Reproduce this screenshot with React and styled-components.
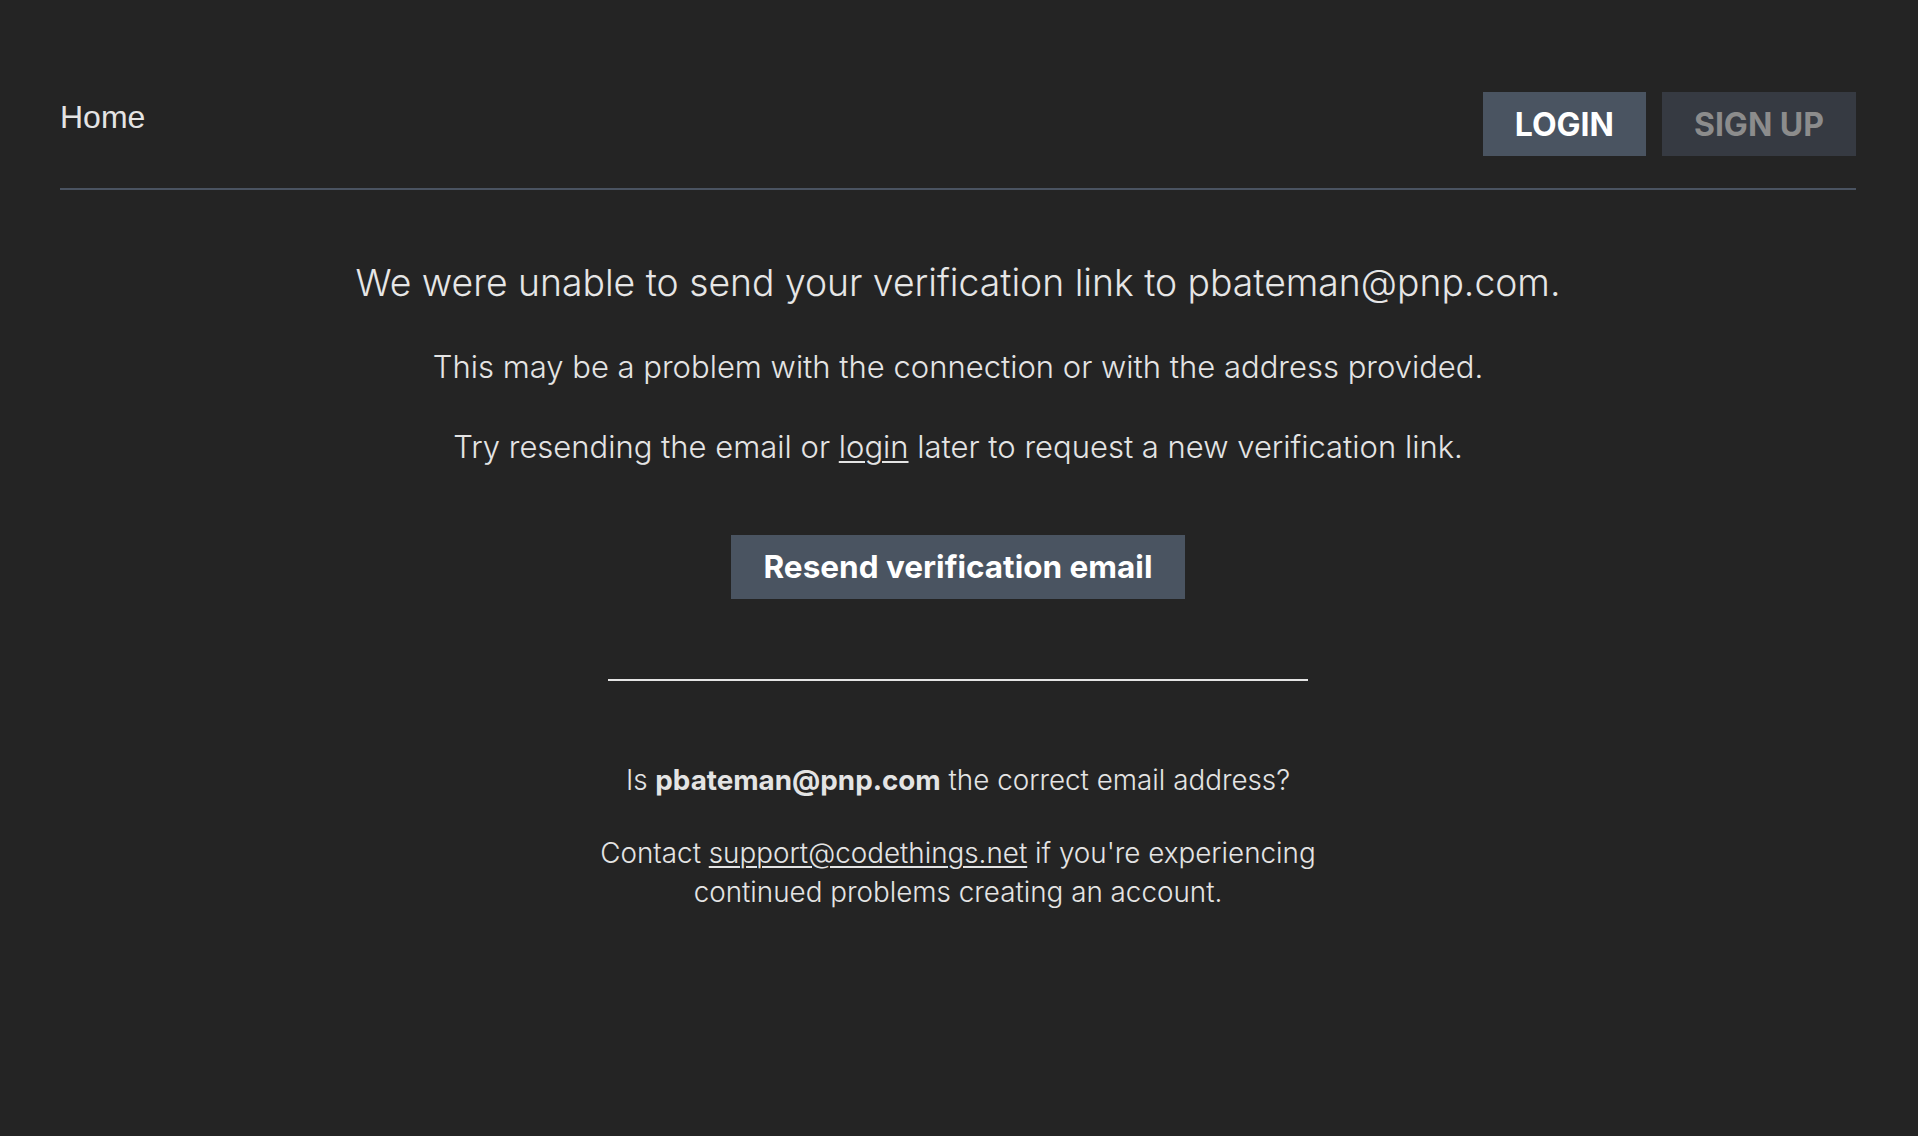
import React from 'react';
import styled, { createGlobalStyle } from 'styled-components';

const GlobalStyle = createGlobalStyle`
  html, body {
    margin: 0;
    padding: 0;
    background: #242424;
  }
  body {
    font-family: Inter, "Noto Sans", sans-serif;
    color: #e4e4e4;
  }
`

const Page = styled.div`
  min-height: 1136px;
  padding: 0 62px 0 60px;
  box-sizing: border-box;
`

const Header = styled.header`
  display: flex;
  justify-content: space-between;
  align-items: flex-start;
  padding: 92px 0 32px;
  border-bottom: 2px solid #4a5361;
`

const HomeLink = styled.a`
  font-family: "Liberation Sans", Arial, sans-serif;
  font-size: 32px;
  line-height: 37px;
  margin-top: 7px;
  color: #e4e4e4;
  text-decoration: none;
`

const Nav = styled.nav`
  display: flex;
  gap: 16px;
`

const NavButton = styled.button`
  height: 64px;
  padding: 0 32px;
  border: none;
  border-radius: 0;
  font-family: Inter, sans-serif;
  font-size: 32px;
  font-weight: 700;
  background: ${p => (p.$primary ? '#4a5461' : '#363a42')};
  color: ${p => (p.$primary ? '#ffffff' : '#8c8c8c')};
  cursor: pointer;
`

const Main = styled.main`
  display: flex;
  flex-direction: column;
  align-items: center;
  text-align: center;
`

const Title = styled.h1`
  margin: 69px 0 0;
  font-size: 37.3px;
  line-height: 48px;
  font-weight: 300;
  color: #e6e6e6;
`

const Para = styled.p`
  margin: ${p => p.$gap}px 0 0;
  font-size: 31px;
  line-height: 45px;
  font-weight: 300;
  color: #e4e4e4;
`

const TextLink = styled.a`
  color: inherit;
  text-decoration: underline;
  text-decoration-thickness: 2px;
  text-underline-offset: 3px;
`

const ResendButton = styled.button`
  margin-top: 66px;
  height: 64px;
  padding: 0 33px;
  border: none;
  background: #4a5461;
  color: #ffffff;
  font-family: Inter, sans-serif;
  font-size: 31.5px;
  font-weight: 700;
  cursor: pointer;
`

const Divider = styled.hr`
  width: 700px;
  margin: 80px 0 0;
  border: none;
  border-top: 2px solid #e4e4e4;
`

const Small = styled.p`
  margin: ${p => p.$gap}px 0 0;
  max-width: 750px;
  font-size: 27.8px;
  line-height: 39px;
  font-weight: 300;
  color: #e4e4e4;

  strong {
    font-weight: 700;
  }
`

export default function App() {
  return (
    <>
      <GlobalStyle />
      <Page>
        <Header>
          <HomeLink href="#">Home</HomeLink>
          <Nav>
            <NavButton $primary>LOGIN</NavButton>
            <NavButton>SIGN UP</NavButton>
          </Nav>
        </Header>
        <Main>
          <Title>We were unable to send your verification link to pbateman@pnp.com.</Title>
          <Para $gap={36.5}>This may be a problem with the connection or with the address provided.</Para>
          <Para $gap={35}>
            Try resending the email or <TextLink href="#">login</TextLink> later to request a new verification link.
          </Para>
          <ResendButton>Resend verification email</ResendButton>
          <Divider />
          <Small $gap={80}>
            Is <strong>pbateman@pnp.com</strong> the correct email address?
          </Small>
          <Small $gap={34}>
            Contact <TextLink href="#">support@codethings.net</TextLink> if you're experiencing continued problems creating an account.
          </Small>
        </Main>
      </Page>
    </>
  );
}
